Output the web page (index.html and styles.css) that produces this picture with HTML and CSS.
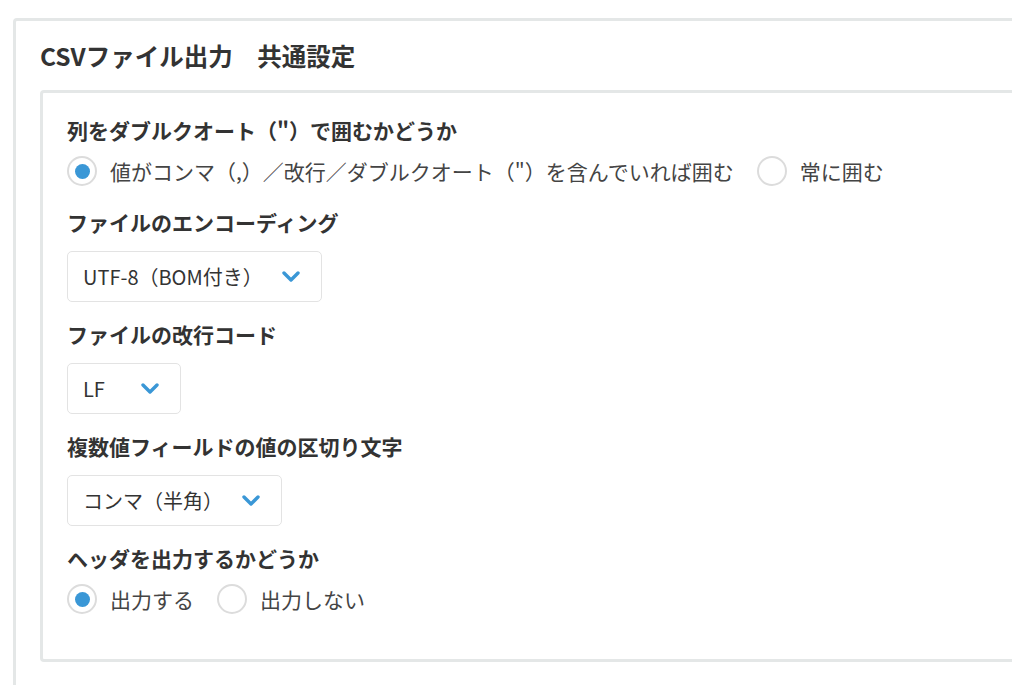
FILE: index.html
```html
<!DOCTYPE html>
<html lang="ja">
<head>
<meta charset="utf-8">
<link rel="stylesheet" href="styles.css">
</head>
<body>
<div class="panel">
  <h2 class="title">CSVファイル出力　共通設定</h2>
  <div class="box">
    <div class="label">列をダブルクオート（"）で囲むかどうか</div>
    <div class="radios">
      <span class="radio on"></span><span class="rtext">値がコンマ（,）／改行／ダブルクオート（"）を含んでいれば囲む</span>
      <span class="radio"></span><span class="rtext">常に囲む</span>
    </div>
    <div class="label gap-r">ファイルのエンコーディング</div>
    <div class="select w1"><span class="sval">UTF-8（BOM付き）</span><svg class="chev" viewBox="0 0 18 11" width="18" height="11"><path d="M2 2l7 7 7-7" fill="none" stroke="#3a97d6" stroke-width="3.4" stroke-linecap="round" stroke-linejoin="round"/></svg></div>
    <div class="label gap-s">ファイルの改行コード</div>
    <div class="select w2"><span class="sval">LF</span><svg class="chev" viewBox="0 0 18 11" width="18" height="11"><path d="M2 2l7 7 7-7" fill="none" stroke="#3a97d6" stroke-width="3.4" stroke-linecap="round" stroke-linejoin="round"/></svg></div>
    <div class="label gap-s">複数値フィールドの値の区切り文字</div>
    <div class="select w3"><span class="sval">コンマ（半角）</span><svg class="chev" viewBox="0 0 18 11" width="18" height="11"><path d="M2 2l7 7 7-7" fill="none" stroke="#3a97d6" stroke-width="3.4" stroke-linecap="round" stroke-linejoin="round"/></svg></div>
    <div class="label gap-s">ヘッダを出力するかどうか</div>
    <div class="radios">
      <span class="radio on"></span><span class="rtext">出力する</span>
      <span class="radio"></span><span class="rtext">出力しない</span>
    </div>
  </div>
</div>
</body>
</html>
```
FILE: styles.css
```css
html, body {
  margin: 0;
  padding: 0;
  background: #fff;
  overflow: hidden;
  height: 685px;
}
body {
  font-family: "Noto Sans CJK JP", "Noto Sans", sans-serif;
  color: #333;
}
.panel {
  margin: 18px 0 0 13px;
  width: 1100px;
  height: 800px;
  border: 3px solid #e4e7e7;
  border-radius: 4px;
  padding: 20px 0 0 24px;
  box-sizing: border-box;
}
.title {
  margin: 0;
  font-size: 24.5px;
  font-weight: bold;
  line-height: 30px;
  color: #333;
}
.box {
  margin-top: 19px;
  border: 3px solid #e4e7e7;
  border-radius: 4px;
  padding: 22px 24px 45px 24px;
}
.label {
  font-size: 21px;
  font-weight: bold;
  line-height: 30px;
  color: #333;
}
.gap-r { margin-top: 21px; }
.gap-s { margin-top: 17px; }
.radios {
  margin-top: 11px;
  display: flex;
  align-items: center;
  height: 30px;
}
.radio {
  width: 30px;
  height: 30px;
  box-sizing: border-box;
  border: 2px solid #dcdcdc;
  border-radius: 50%;
  display: flex;
  align-items: center;
  justify-content: center;
  flex: none;
}
.radio.on::after {
  content: "";
  width: 15px;
  height: 15px;
  border-radius: 50%;
  background: #3a97d6;
}
.rtext {
  margin-left: 13px;
  margin-right: 23px;
  font-size: 21px;
  color: #444;
  line-height: 30px;
}
.select {
  margin-top: 14px;
  height: 51px;
  box-sizing: border-box;
  border: 1px solid #e3e3e3;
  border-radius: 5px;
  display: flex;
  align-items: center;
  padding-left: 15px;
}
.w1 { width: 255px; }
.w2 { width: 114px; }
.w3 { width: 215px; }
.sval {
  font-size: 20px;
  color: #333;
  flex: 1;
}
.chev {
  margin-right: 21px;
  flex: none;
}
```
